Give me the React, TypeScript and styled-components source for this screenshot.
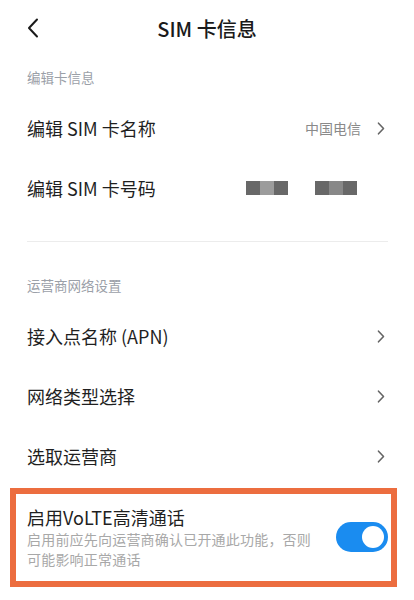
import React from "react"
import styled, { createGlobalStyle } from "styled-components"

const GlobalStyle = createGlobalStyle`
  html, body {
    margin: 0;
    padding: 0;
    background: #ffffff;
  }
  body {
    font-family: "Noto Sans CJK SC", "Noto Sans", sans-serif;
    color: #1f1f1f;
  }
`

const Page = styled.div`
  width: 414px;
  height: 600px;
  overflow: hidden;
  background: #ffffff;
`

const Header = styled.div`
  position: relative;
  height: 56px;
  display: flex;
  align-items: center;
  justify-content: center;
`

const BackButton = styled.div`
  position: absolute;
  left: 27px;
  top: 18px;
  width: 14px;
  height: 20px;
  display: flex;
  align-items: center;
`

const Title = styled.div`
  font-size: 20px;
  font-weight: 500;
  color: #1a1a1a;
`

const SectionTitle = styled.div<{ $gap?: number }>`
  height: 42px;
  margin-top: ${p => p.$gap ?? 0}px;
  padding: 0 27px;
  display: flex;
  align-items: center;
  font-size: 13.5px;
  color: #9ba0a8;
`

const Row = styled.div`
  height: 60px;
  padding: 0 29px 0 27px;
  display: flex;
  align-items: center;
  justify-content: space-between;
`

const Label = styled.div`
  font-size: 18px;
  color: #1f1f1f;
`

const Right = styled.div`
  display: flex;
  align-items: center;
  gap: 16px;
`

const Value = styled.div`
  font-size: 14px;
  color: #8a8a8a;
`

const Masked = styled.div`
  display: flex;
  gap: 27px;
  margin-right: 28px;
`

const MaskBlock = styled.div<{ $mid: string }>`
  display: flex;
  width: 42px;
  height: 14px;
  & > span {
    flex: 1;
    background: #686868;
  }
  & > span:nth-child(2) {
    background: ${p => p.$mid};
  }
`

const Divider = styled.div`
  margin: 23px 26px 0 27px;
  height: 1px;
  background: #ececec;
`

const Highlight = styled.div`
  margin: 2px 17px 0 10px;
  border: 6px solid #ec6d3f;
  padding: 11px 3px 12px 11px;
  display: flex;
  align-items: center;
  justify-content: space-between;
`

const HighlightText = styled.div`
  display: flex;
  flex-direction: column;
`

const HighlightTitle = styled.div`
  font-size: 18px;
  line-height: 24px;
  color: #1f1f1f;
`

const Desc = styled.div`
  font-size: 14px;
  line-height: 20px;
  color: #a8a8a8;
  width: 292px;
  letter-spacing: 0.2px;
`

const Toggle = styled.div<{ $on: boolean }>`
  width: 52px;
  height: 30px;
  border-radius: 15px;
  background: ${p => (p.$on ? "#1a8cf0" : "#d8d8d8")};
  display: flex;
  align-items: center;
  justify-content: ${p => (p.$on ? "flex-end" : "flex-start")};
  padding: 0 4px;
  box-sizing: border-box;
`

const Knob = styled.div`
  width: 22px;
  height: 22px;
  border-radius: 50%;
  background: #ffffff;
`

const Chevron = () => (
  <svg width="8" height="13" viewBox="0 0 8 13">
    <path d="M1.5 1.2 L6.5 6.5 L1.5 11.8" fill="none" stroke="#666" strokeWidth="1.6" strokeLinecap="round" strokeLinejoin="round" />
  </svg>
)

const BackIcon = () => (
  <svg width="12" height="20" viewBox="0 0 12 20">
    <path d="M10 1.5 L2 10 L10 18.5" fill="none" stroke="#1a1a1a" strokeWidth="2" strokeLinecap="round" strokeLinejoin="round" />
  </svg>
)

const NETWORK_ROWS = ["接入点名称 (APN)", "网络类型选择", "选取运营商"]

const App = () => (
  <Page>
    <GlobalStyle />
    <Header>
      <BackButton>
        <BackIcon />
      </BackButton>
      <Title>SIM 卡信息</Title>
    </Header>

    <SectionTitle>编辑卡信息</SectionTitle>
    <Row>
      <Label>编辑 SIM 卡名称</Label>
      <Right>
        <Value>中国电信</Value>
        <Chevron />
      </Right>
    </Row>
    <Row>
      <Label>编辑 SIM 卡号码</Label>
      <Masked>
        <MaskBlock $mid="#9c9c9c">
          <span />
          <span />
          <span />
        </MaskBlock>
        <MaskBlock $mid="#888888">
          <span />
          <span />
          <span />
        </MaskBlock>
      </Masked>
    </Row>

    <Divider />

    <SectionTitle $gap={22}>运营商网络设置</SectionTitle>
    {NETWORK_ROWS.map(label => (
      <Row key={label}>
        <Label>{label}</Label>
        <Chevron />
      </Row>
    ))}

    <Highlight>
      <HighlightText>
        <HighlightTitle>启用VoLTE高清通话</HighlightTitle>
        <Desc>启用前应先向运营商确认已开通此功能，否则可能影响正常通话</Desc>
      </HighlightText>
      <Toggle $on>
        <Knob />
      </Toggle>
    </Highlight>
  </Page>
)

export default App
